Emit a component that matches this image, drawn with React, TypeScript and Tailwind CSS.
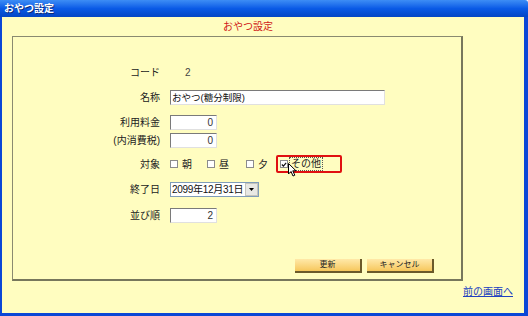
import React from "react";

const FONT = "font-['Liberation_Sans','Noto_Sans_CJK_JP',sans-serif]";

const Label = ({ children }: { children: React.ReactNode }) => (
  <div className="w-[148px] pr-[1px] text-right text-[10px] text-[#222]">{children}</div>
);

const NumBox = ({ value }: { value: string }) => (
  <div className="w-[47px] h-[15px] bg-white border-t border-l border-t-[#7a7a7a] border-l-[#7a7a7a] border-b border-r border-b-[#e0e0e0] border-r-[#e0e0e0] text-[10px] leading-[13px] text-right pr-[3px] text-[#333]">
    {value}
  </div>
);

const Check = ({ checked }: { checked?: boolean }) => (
  <span className="inline-flex w-[8px] h-[8px] items-center justify-center bg-white border border-[#8c8c8c]">
    {checked && (
      <svg width="7" height="7" viewBox="0 0 7 7">
        <path d="M1 3.5 L2.8 5.3 L6 1.5" stroke="#111" strokeWidth="1.4" fill="none" />
      </svg>
    )}
  </span>
);

const Btn = ({ children }: { children: React.ReactNode }) => (
  <button className="w-[67px] h-[14px] bg-gradient-to-b from-[#ffe9a8] to-[#f6c75a] border-r-2 border-b-2 border-r-[#6b5a2a] border-b-[#6b5a2a] text-[8px] leading-[12px] text-[#222]">
    {children}
  </button>
);

export default function App() {
  return (
    <div className={`w-[528px] h-[316px] flex flex-col ${FONT} overflow-hidden`}>
      {/* title bar */}
      <div className="h-[17px] shrink-0 bg-gradient-to-b from-[#3d8df5] via-[#0a5ae6] to-[#0446c4] flex items-center pl-[4px] rounded-tr-[3px]">
        <span className="text-white text-[10px] font-bold [text-shadow:1px_1px_0_#0a2a7a]">おやつ設定</span>
      </div>

      <div className="flex-1 flex flex-col bg-[#fffdc0] border-l-2 border-r-4 border-b-[3px] border-[#0b47d6]">
        <div className="h-[19px] shrink-0 pl-[221px] pt-[3px] text-[10px] text-[#d01818] leading-[14px]">
          おやつ設定
        </div>

        <div className="ml-[10px] w-[451px] h-[245px] shrink-0 border border-[#8a8a70] border-r-2 border-b-2 border-r-[#77775c] border-b-[#77775c] flex flex-col">
          <div className="mt-[27px] h-[16px] flex items-center">
            <Label>コード</Label>
            <span className="ml-[24px] text-[10px] text-[#444]">2</span>
          </div>

          <div className="mt-[9px] h-[16px] flex items-center">
            <Label>名称</Label>
            <div className="ml-[9px] w-[215px] h-[15px] bg-white border-t border-l border-t-[#7a7a7a] border-l-[#7a7a7a] border-b border-r border-b-[#e0e0e0] border-r-[#e0e0e0] text-[9.5px] leading-[13px] pl-[1px] text-[#111]">
              おやつ(糖分制限)
            </div>
          </div>

          <div className="mt-[9px] h-[16px] flex items-center">
            <Label>利用料金</Label>
            <div className="ml-[9px]"><NumBox value="0" /></div>
          </div>

          <div className="mt-[2px] h-[16px] flex items-center">
            <Label>(内消費税)</Label>
            <div className="ml-[9px]"><NumBox value="0" /></div>
          </div>

          <div className="mt-[8px] h-[16px] flex items-center relative">
            <Label>対象</Label>
            <div className="ml-[9px] flex items-center text-[10px] text-[#222]">
              <Check />
              <span className="ml-[4px] w-[25px]">朝</span>
              <Check />
              <span className="ml-[4px] w-[27px]">昼</span>
              <Check />
              <span className="ml-[4px] w-[18px]">夕</span>
              <div className="relative flex items-center border-2 border-[#e01010] rounded-[2px] w-[66px] h-[18px] pl-[2px]">
                <Check checked />
                <span className="ml-[1px] px-[1px] border border-dotted border-[#555] leading-[12px]">その他</span>
                <svg className="absolute left-[10px] top-[6px]" width="10" height="15" viewBox="0 0 10 15">
                  <path d="M0.5 0.5 L0.5 11 L3 8.5 L5 13 L6.8 12.2 L4.8 7.8 L8 7.8 Z" fill="#fff" stroke="#000" strokeWidth="1" />
                </svg>
              </div>
            </div>
          </div>

          <div className="mt-[9px] h-[16px] flex items-center">
            <Label>終了日</Label>
            <div className="ml-[9px] w-[89px] h-[15px] bg-white border border-[#7f9db9] flex items-center">
              <span className="flex-1 text-[10px] leading-[13px] pl-[1px] text-[#111] tracking-[-0.3px]">2099年12月31日</span>
              <span className="w-[13px] h-[13px] bg-[#e8e8e4] border border-[#c4c4bc] flex items-center justify-center">
                <svg width="5" height="3" viewBox="0 0 5 3"><path d="M0 0 H5 L2.5 3 Z" fill="#000" /></svg>
              </span>
            </div>
          </div>

          <div className="mt-[10px] h-[16px] flex items-center">
            <Label>並び順</Label>
            <div className="ml-[9px]"><NumBox value="2" /></div>
          </div>

          <div className="mt-[36px] flex pl-[282px] gap-[5px]">
            <Btn>更新</Btn>
            <Btn>キャンセル</Btn>
          </div>
        </div>

        <div className="mt-[4px] flex justify-end pr-[11px]">
          <a className="text-[10px] text-[#2040c0] underline leading-[14px]">前の画面へ</a>
        </div>
      </div>
    </div>
  );
}
